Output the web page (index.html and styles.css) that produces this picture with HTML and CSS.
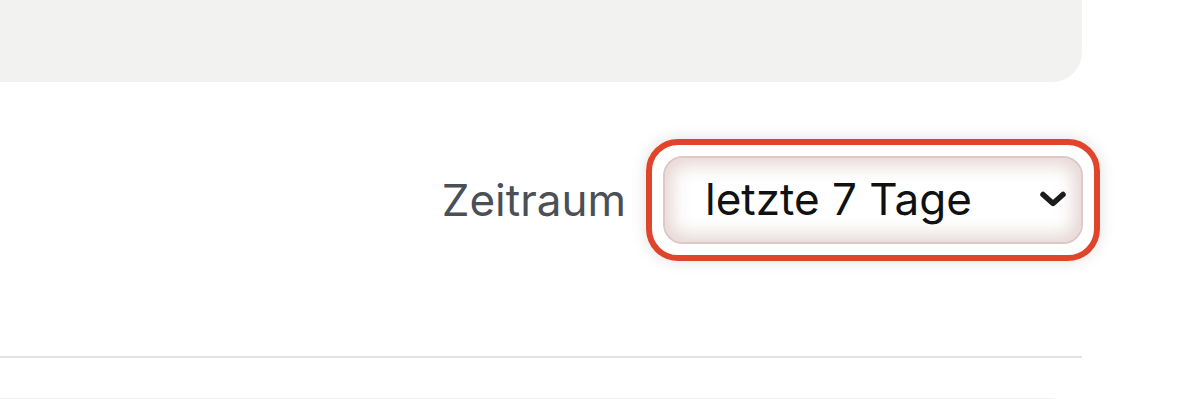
FILE: index.html
```html
<!DOCTYPE html>
<html lang="de">
<head>
  <meta charset="UTF-8">
  <title>Zeitraum</title>
  <link rel="stylesheet" href="styles.css">
</head>
<body>

  <div class="page">
    <div class="panel"></div>

    <div class="filter-row">
      <label class="filter-label" for="range">Zeitraum</label>
      <div class="select-focus">
        <div class="select-box">
          <span class="select-value" id="range">letzte 7 Tage</span>
          <svg class="chevron" width="28" height="18" viewBox="0 0 28 18">
            <path d="M4 4.5 L14 13.5 L24 4.5" fill="none" stroke="#1c1c1c" stroke-width="5.5" stroke-linecap="round" stroke-linejoin="round"/>
          </svg>
        </div>
      </div>
    </div>

    <div class="divider"></div>
    <div class="divider faint"></div>
  </div>

</body>
</html>
```

FILE: styles.css
```css
body {
  font-family: Inter, "Noto Sans", sans-serif;
  background: #fff;
  margin: 0;
  padding: 0;
}

.page {
  width: 1082px;
}

.panel {
  height: 82px;
  background: #f2f2f0;
  border-radius: 0 0 30px 0;
}

.filter-row {
  display: flex;
  justify-content: flex-end;
  align-items: center;
  gap: 20px;
  margin-top: 57px;
  margin-right: -18px;
}

.filter-label {
  font-size: 44px;
  color: #4b4f56;
}

.select-focus {
  padding: 11px;
  border: 6px solid #e0452b;
  border-radius: 32px;
  box-shadow: 0 0 16px rgba(0, 0, 0, 0.13);
}

.select-box {
  display: flex;
  align-items: center;
  justify-content: space-between;
  box-sizing: border-box;
  width: 420px;
  height: 88px;
  padding: 0 14px 2px 40px;
  border: 2px solid #dcc8c4;
  border-radius: 20px;
  background: #fff;
  box-shadow: inset 0 0 18px 7px rgba(190, 150, 145, 0.4);
}

.select-value {
  font-size: 44px;
  color: #111;
}

.chevron {
  display: block;
}

.divider {
  height: 2px;
  background: #e2e2e2;
  margin-top: 95px;
}

.divider.faint {
  width: 1055px;
  height: 1px;
  background: #f3f3f3;
  margin-top: 40px;
}
```
